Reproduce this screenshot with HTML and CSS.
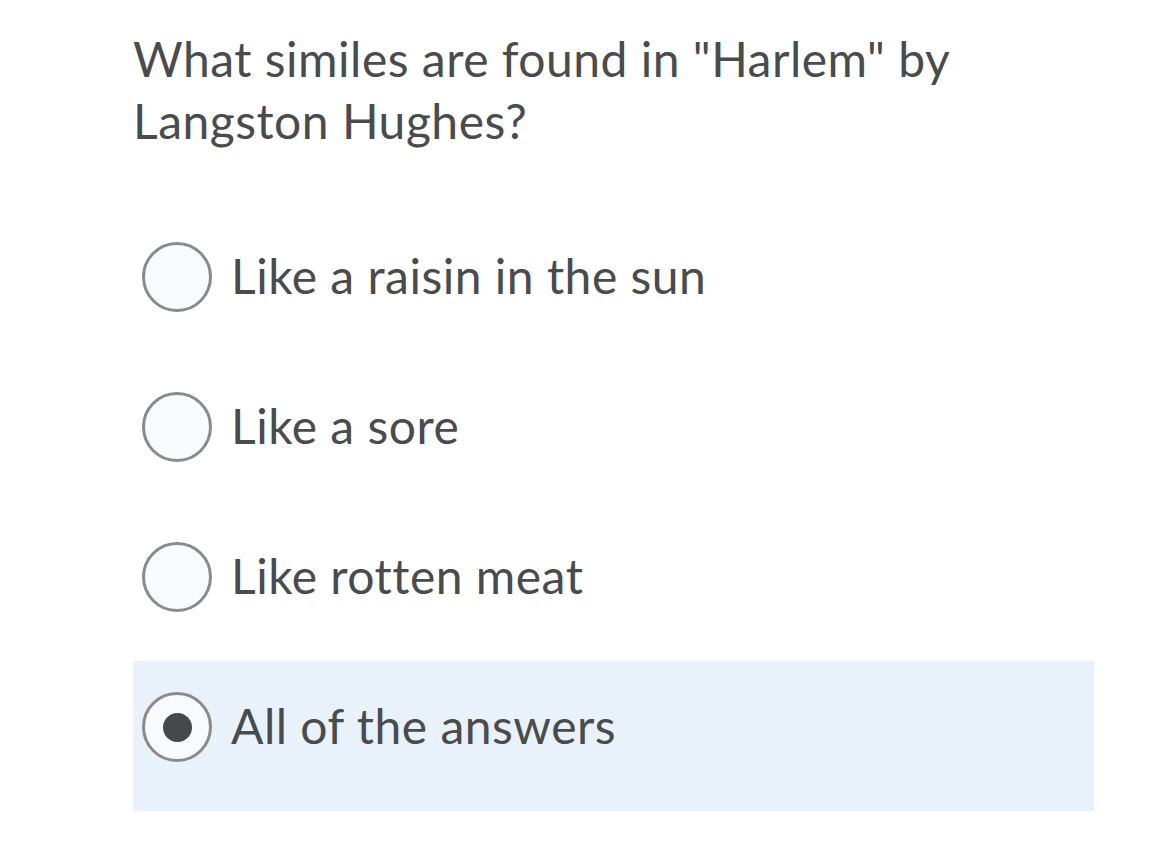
FILE: index.html
```html
<!DOCTYPE html>
<html lang="en">
<head>
<meta charset="utf-8">
<title>Quiz question</title>
<link rel="stylesheet" href="styles.css">
</head>
<body>
<main class="quiz">
  <h1 class="question">What similes are found in "Harlem" by Langston Hughes?</h1>
  <div class="options">
    <label class="option">
      <span class="radio"></span>
      <span class="label">Like a raisin in the sun</span>
    </label>
    <label class="option">
      <span class="radio"></span>
      <span class="label">Like a sore</span>
    </label>
    <label class="option">
      <span class="radio"></span>
      <span class="label">Like rotten meat</span>
    </label>
    <label class="option selected">
      <span class="radio checked"></span>
      <span class="label">All of the answers</span>
    </label>
  </div>
</main>
</body>
</html>
```

FILE: styles.css
```css
html, body {
  margin: 0;
  padding: 0;
  background: #ffffff;
}

body {
  font-family: Lato, "Open Sans", "Liberation Sans", sans-serif;
  color: #494b4d;
  font-variant-ligatures: none;
  letter-spacing: 0.5px;
}

.quiz {
  width: 961px;
  margin-left: 133px;
  padding-top: 28px;
}

.question {
  margin: 0;
  font-size: 48px;
  font-weight: 400;
  line-height: 62px;
  width: 860px;
}

.options {
  margin-top: 59px;
  display: flex;
  flex-direction: column;
}

.option {
  display: flex;
  align-items: flex-start;
  gap: 19px;
  height: 150px;
  box-sizing: border-box;
  padding: 31px 9px 49px;
}

.option.selected {
  background: #e9f1fa;
}

.radio {
  flex: none;
  width: 70px;
  height: 70px;
  box-sizing: border-box;
  border: 3px solid #888a8c;
  border-radius: 50%;
  background: #f9fafc;
  display: flex;
  align-items: center;
  justify-content: center;
}

.radio.checked::after {
  content: "";
  width: 29px;
  height: 29px;
  border-radius: 50%;
  background: #46484a;
}

.label {
  font-size: 48px;
  line-height: 68px;
}
```
